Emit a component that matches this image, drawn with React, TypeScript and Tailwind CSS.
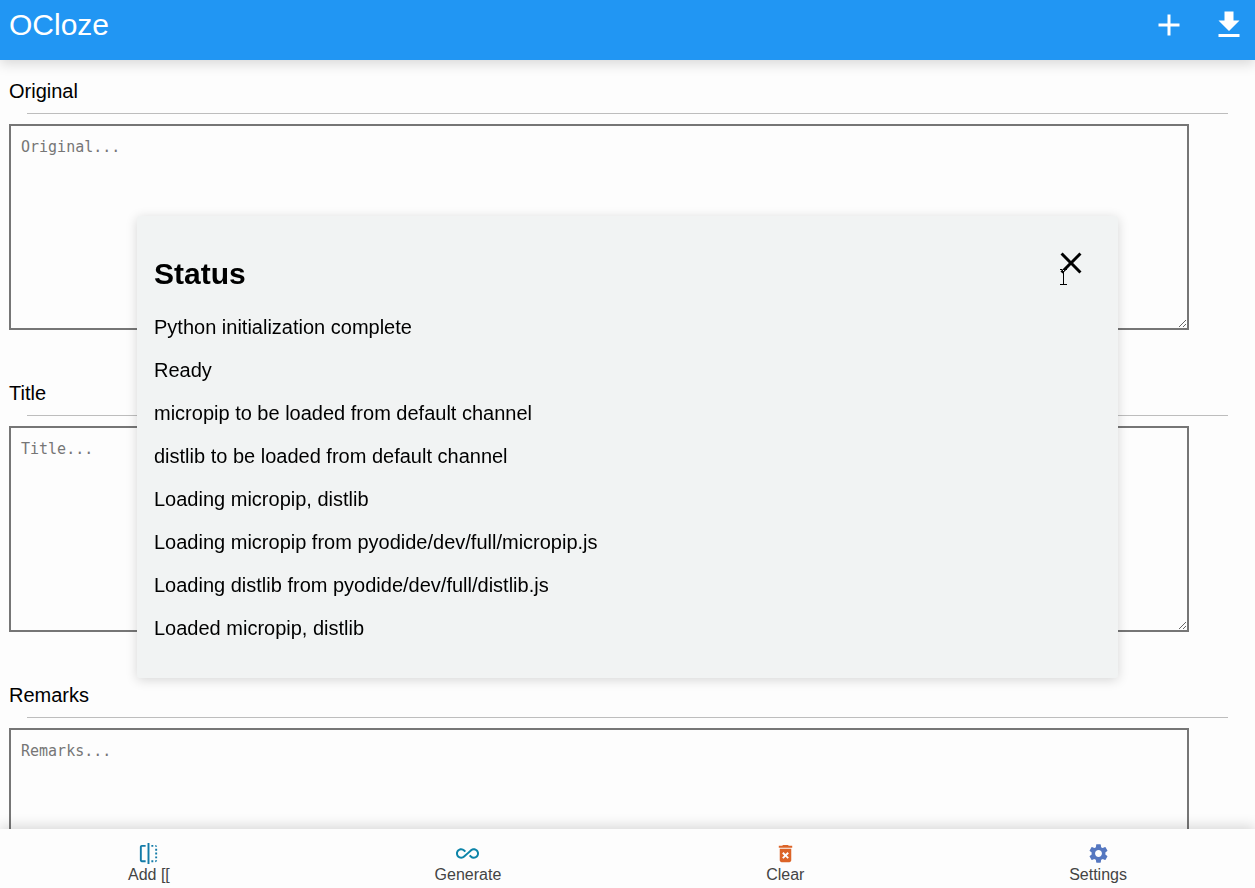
import { useState } from "react";
import type { ReactNode } from "react";
import {
  MdAdd,
  MdAllInclusive,
  MdClose,
  MdDeleteForever,
  MdFileDownload,
  MdFlip,
  MdSettings,
} from "react-icons/md";

const messages = [
  "Python initialization complete",
  "Ready",
  "micropip to be loaded from default channel",
  "distlib to be loaded from default channel",
  "Loading micropip, distlib",
  "Loading micropip from pyodide/dev/full/micropip.js",
  "Loading distlib from pyodide/dev/full/distlib.js",
  "Loaded micropip, distlib",
];

function Field({ id, label }: { id: string; label: string }) {
  return (
    <section className="flex shrink-0 flex-col">
      <label htmlFor={id} className="text-[20px] leading-[23px] text-black">
        {label}
      </label>
      <hr className="mt-[10px] mb-[10px] ml-[18px] border-[#bdbdbd]" />
      <textarea
        id={id}
        placeholder={`${label}...`}
        className="h-[206px] w-[calc(100%-39px)] resize border-2 border-[#767676] bg-[#fdfdfd] p-[10px] font-['DejaVu_Sans_Mono',monospace] text-[15px] leading-[22px] placeholder:text-[#767676] focus:outline-none"
      />
    </section>
  );
}

function FooterButton({ label, color, children }: { label: string; color: string; children: ReactNode }) {
  return (
    <button type="button" className="flex flex-col items-center text-[16px] leading-5 text-[#444444]">
      <span className={color}>{children}</span>
      {label}
    </button>
  );
}

function TextCursor() {
  return (
    <svg
      aria-hidden="true"
      className="pointer-events-none absolute top-6 left-1.5"
      width="9"
      height="18"
      viewBox="0 0 9 18"
      fill="none"
      stroke="#000"
      shapeRendering="crispEdges"
    >
      <path d="M3 1.5h3" stroke="#fff" />
      <path d="M1 .5h2M6 .5h2M3 1.5h1M5 1.5h1M4.500 2v13M1 15.500h7" />
    </svg>
  );
}

export default function App() {
  const [open, setOpen] = useState(true);
  return (
    <div className="flex h-screen flex-col bg-[#fdfdfd] font-['Liberation_Sans',Arial,sans-serif]">
      <header className="relative z-10 flex h-[60px] shrink-0 justify-between bg-[#2196f3] pt-[7px] pr-2 pl-[9px] text-white shadow-[0_4px_12px_rgba(0,0,0,0.15)]">
        <h1 className="text-[30px] leading-[35px]">OCloze</h1>
        <div className="flex items-start gap-6">
          <button type="button" aria-label="Add">
            <MdAdd size={36} />
          </button>
          <button type="button" aria-label="Download">
            <MdFileDownload size={36} />
          </button>
        </div>
      </header>

      <main className="flex min-h-0 flex-1 flex-col gap-[52px] overflow-y-auto pt-5 pr-[27px] pl-[9px] [scrollbar-width:none]">
        <Field id="original" label="Original" />
        <Field id="title" label="Title" />
        <Field id="remarks" label="Remarks" />
      </main>

      <footer className="relative z-10 flex shrink-0 items-start justify-between bg-[#fdfdfd] px-32 pt-[13px] pb-[3px] shadow-[0_-3px_12px_rgba(0,0,0,0.15)]">
        <FooterButton label="Add [[" color="text-[#137ba8]">
          <MdFlip size={23} />
        </FooterButton>
        <FooterButton label="Generate" color="text-[#0c84a8]">
          <MdAllInclusive size={23} />
        </FooterButton>
        <FooterButton label="Clear" color="text-[#dc6428]">
          <MdDeleteForever size={23} />
        </FooterButton>
        <FooterButton label="Settings" color="text-[#5577c0]">
          <MdSettings size={23} />
        </FooterButton>
      </footer>

      {open && (
        <div className="pointer-events-none fixed inset-0 z-20 flex items-center justify-center px-[137px] pt-[6px]">
          <div
            role="dialog"
            aria-labelledby="status-title"
            className="pointer-events-auto w-full rounded-[3px] bg-[#f1f3f3] pt-[29px] pr-[29px] pb-[38px] pl-[17px] shadow-[0_2px_12px_rgba(0,0,0,0.16)]"
          >
            <div className="mb-6 flex items-start justify-between">
              <h2 id="status-title" className="pt-[11px] text-[30px] leading-9 font-bold text-black">
                Status
              </h2>
              <button type="button" aria-label="Close" onClick={() => setOpen(false)} className="relative text-black">
                <MdClose size={36} />
                <TextCursor />
              </button>
            </div>
            <div className="flex flex-col gap-5 text-[20px] leading-[23px] text-black">
              {messages.map((message) => (
                <p key={message}>{message}</p>
              ))}
            </div>
          </div>
        </div>
      )}
    </div>
  );
}
